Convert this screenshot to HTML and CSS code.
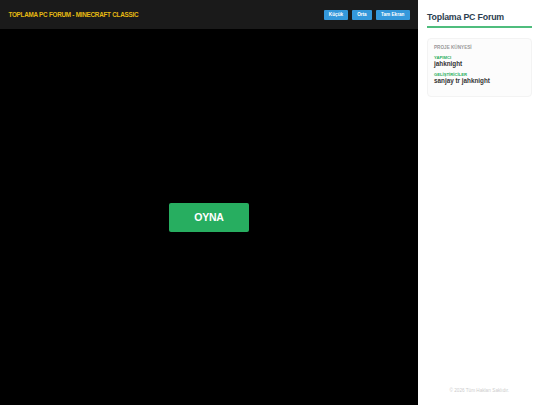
FILE: index.html
```html
<!DOCTYPE html>
<html lang="tr">
<head>
<meta charset="utf-8">
<title>Toplama PC Forum</title>
<link rel="stylesheet" href="styles.css">
</head>
<body>
<main class="game">
  <header class="topbar">
    <h1 class="topbar-title">TOPLAMA PC FORUM - MINECRAFT CLASSIC</h1>
    <div class="sizes">
      <button class="size small">Küçük</button>
      <button class="size medium">Orta</button>
      <button class="size full">Tam Ekran</button>
    </div>
  </header>
  <div class="stage"><button class="play">OYNA</button></div>
</main>
<aside class="sidebar">
  <h2 class="brand">Toplama PC Forum</h2>
  <section class="card">
    <h3 class="card-title">PROJE KÜNYESİ</h3>
    <div class="role">YAPIMCI</div>
    <div class="name">jahknight</div>
    <div class="role next">GELİŞTİRİCİLER</div>
    <div class="name">sanjay tr jahknight</div>
  </section>
  <footer class="copyright">© 2026 Tüm Hakları Saklıdır.</footer>
</aside>
</body>
</html>
```
FILE: styles.css
```css
* {
  box-sizing: border-box;
  margin: 0;
  padding: 0;
}

body {
  display: flex;
  width: 540px;
  height: 405px;
  overflow: hidden;
  background: #fff;
  font-family: "Liberation Sans", Arial, sans-serif;
}

.game {
  display: flex;
  flex-direction: column;
  width: 418px;
  background: #000;
}

.topbar {
  display: flex;
  align-items: center;
  justify-content: space-between;
  height: 29.4px;
  padding: 0 8.4px;
  background: #1a1a1a;
}

.topbar-title {
  color: #e6bb12;
  font-size: 6.33px;
  letter-spacing: -0.25px;
  line-height: 8px;
  white-space: nowrap;
}

.sizes {
  display: flex;
  gap: 4.2px;
}

.size {
  height: 10.4px;
  border: 0;
  border-radius: 1px;
  background: #3498db;
  color: #fff;
  font: bold 4.65px/10px "Liberation Sans", Arial, sans-serif;
  white-space: nowrap;
}

.small {
  width: 24.2px;
}

.medium {
  width: 19.4px;
}

.full {
  width: 33.8px;
}

.stage {
  display: flex;
  flex: 1;
  align-items: center;
  justify-content: center;
}

.play {
  width: 80px;
  height: 29px;
  border: 0;
  border-radius: 2px;
  background: #27ae60;
  color: #fff;
  font: bold 10.5px/29px "Liberation Sans", Arial, sans-serif;
  letter-spacing: -0.2px;
}

.sidebar {
  display: flex;
  flex: 1;
  flex-direction: column;
  padding: 11px 8.4px 11px 9px;
  background: #fff;
}

.brand {
  height: 17px;
  border-bottom: 2px solid #4fbd7d;
  color: #2c3e50;
  font-size: 8.8px;
  letter-spacing: -0.19px;
  line-height: 12px;
  white-space: nowrap;
}

.card {
  height: 59px;
  margin-top: 10px;
  padding: 6px;
  border: 1px solid #f3f3f3;
  border-radius: 4px;
  background: #fcfcfc;
  white-space: nowrap;
}

.card-title {
  height: 10px;
  color: #999;
  font-size: 4.65px;
  font-weight: bold;
  line-height: 6px;
}

.role {
  color: #27ae60;
  font-size: 4.2px;
  font-weight: bold;
  line-height: 5px;
}

.name {
  color: #333;
  font-size: 6.33px;
  font-weight: bold;
  line-height: 7px;
}

.next {
  margin-top: 5px;
}

.copyright {
  margin-top: auto;
  color: #ccc;
  font-size: 4.65px;
  line-height: 7px;
  text-align: center;
}
```
